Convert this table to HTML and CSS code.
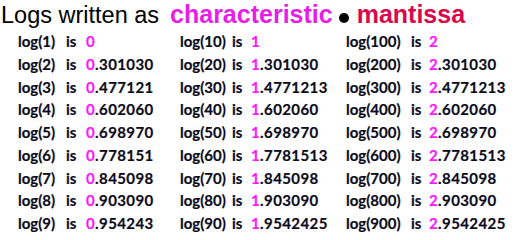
FILE: index.html
```html
<!DOCTYPE html>
<html>
<head>
<meta charset="utf-8">
<link rel="stylesheet" href="styles.css">
</head>
<body>
<div class="page">
  <h1 class="title">
    <span class="lead">Logs written as</span>
    <span class="char">characteristic</span>
    <span class="dot"></span>
    <span class="mant">mantissa</span>
  </h1>
  <div class="table">
    <span>log(1)</span><span>is</span><span class="v"><b>0</b></span>
    <span>log(10)</span><span>is</span><span class="v"><b>1</b></span>
    <span>log(100)</span><span>is</span><span class="v"><b>2</b></span>

    <span>log(2)</span><span>is</span><span class="v"><b>0</b>.301030</span>
    <span>log(20)</span><span>is</span><span class="v"><b>1</b>.301030</span>
    <span>log(200)</span><span>is</span><span class="v"><b>2</b>.301030</span>

    <span>log(3)</span><span>is</span><span class="v"><b>0</b>.477121</span>
    <span>log(30)</span><span>is</span><span class="v"><b>1</b>.4771213</span>
    <span>log(300)</span><span>is</span><span class="v"><b>2</b>.4771213</span>

    <span>log(4)</span><span>is</span><span class="v"><b>0</b>.602060</span>
    <span>log(40)</span><span>is</span><span class="v"><b>1</b>.602060</span>
    <span>log(400)</span><span>is</span><span class="v"><b>2</b>.602060</span>

    <span>log(5)</span><span>is</span><span class="v"><b>0</b>.698970</span>
    <span>log(50)</span><span>is</span><span class="v"><b>1</b>.698970</span>
    <span>log(500)</span><span>is</span><span class="v"><b>2</b>.698970</span>

    <span>log(6)</span><span>is</span><span class="v"><b>0</b>.778151</span>
    <span>log(60)</span><span>is</span><span class="v"><b>1</b>.7781513</span>
    <span>log(600)</span><span>is</span><span class="v"><b>2</b>.7781513</span>

    <span>log(7)</span><span>is</span><span class="v"><b>0</b>.845098</span>
    <span>log(70)</span><span>is</span><span class="v"><b>1</b>.845098</span>
    <span>log(700)</span><span>is</span><span class="v"><b>2</b>.845098</span>

    <span>log(8)</span><span>is</span><span class="v"><b>0</b>.903090</span>
    <span>log(80)</span><span>is</span><span class="v"><b>1</b>.903090</span>
    <span>log(800)</span><span>is</span><span class="v"><b>2</b>.903090</span>

    <span>log(9)</span><span>is</span><span class="v"><b>0</b>.954243</span>
    <span>log(90)</span><span>is</span><span class="v"><b>1</b>.9542425</span>
    <span>log(900)</span><span>is</span><span class="v"><b>2</b>.9542425</span>
  </div>
</div>
</body>
</html>
```

FILE: styles.css
```css
html, body {
  margin: 0;
  padding: 0;
  background: #ffffff;
}

.page {
  width: 514px;
  height: 240px;
  overflow: hidden;
}

.title {
  margin: 0;
  height: 30px;
  display: flex;
  align-items: baseline;
  padding-left: 1px;
  font-family: "Liberation Sans", Arial, sans-serif;
  font-weight: normal;
  line-height: 28px;
}

.lead {
  font-size: 23.5px;
  color: #000;
}

.char {
  font-size: 25px;
  font-weight: bold;
  color: #e61ee6;
  margin-left: 11px;
}

.dot {
  width: 10px;
  height: 10px;
  border-radius: 50%;
  background: #000;
  margin-left: 6px;
  margin-right: 8px;
  align-self: center;
  position: relative;
  top: 3px;
}

.mant {
  font-size: 25px;
  font-weight: bold;
  color: #d8084c;
}

.table {
  display: grid;
  grid-template-columns: 48px 20px 94px 52px 19px 95px 65px 18px 1fr;
  grid-auto-rows: 22.75px;
  padding-left: 18px;
  margin-top: 0;
  font-family: Lato, "Open Sans", sans-serif;
  font-weight: bold;
  font-size: 15px;
  line-height: 22.75px;
  color: #0c0c1c;
  white-space: nowrap;
  -webkit-text-stroke: 0.2px #0c0c1c;
}

.v {
  letter-spacing: 0.4px;
}

.table b {
  color: #ff18ff;
  font-weight: bold;
  -webkit-text-stroke: 0.2px #ff18ff;
}
```
